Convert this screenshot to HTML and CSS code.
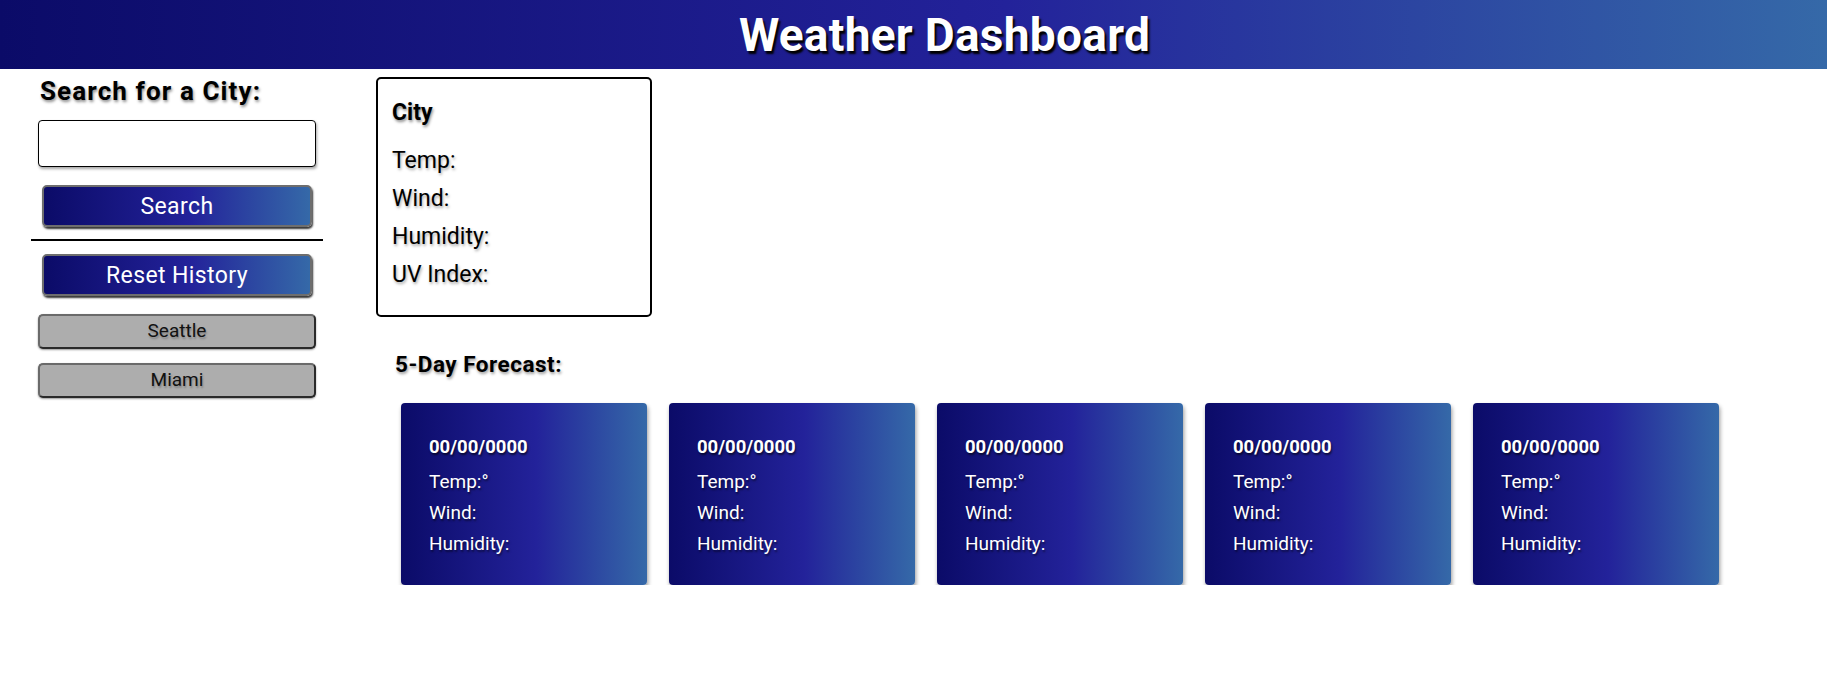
FILE: index.html
```html
<!DOCTYPE html>
<html lang="en">
<head>
<meta charset="utf-8">
<title>Weather Dashboard</title>
<link rel="stylesheet" href="styles.css">
</head>
<body>
<header class="topbar">
  <h1 class="title">Weather Dashboard</h1>
</header>
<main class="layout">
  <aside class="sidebar">
    <h2 class="side-heading">Search for a City:</h2>
    <input class="city-input" type="text">
    <button class="btn-primary">Search</button>
    <hr class="divider">
    <button class="btn-primary btn-reset">Reset History</button>
    <div class="history">
      <button class="btn-history">Seattle</button>
      <button class="btn-history">Miami</button>
    </div>
  </aside>
  <section class="content">
    <div class="current">
      <h3 class="current-city">City</h3>
      <p class="current-line">Temp:</p>
      <p class="current-line">Wind:</p>
      <p class="current-line">Humidity:</p>
      <p class="current-line">UV Index:</p>
    </div>
    <h3 class="forecast-heading">5-Day Forecast:</h3>
    <div class="forecast-row">
      <div class="fcard"><h4 class="fdate">00/00/0000</h4><p class="fline">Temp:&deg;</p><p class="fline">Wind:</p><p class="fline">Humidity:</p></div>
      <div class="fcard"><h4 class="fdate">00/00/0000</h4><p class="fline">Temp:&deg;</p><p class="fline">Wind:</p><p class="fline">Humidity:</p></div>
      <div class="fcard"><h4 class="fdate">00/00/0000</h4><p class="fline">Temp:&deg;</p><p class="fline">Wind:</p><p class="fline">Humidity:</p></div>
      <div class="fcard"><h4 class="fdate">00/00/0000</h4><p class="fline">Temp:&deg;</p><p class="fline">Wind:</p><p class="fline">Humidity:</p></div>
      <div class="fcard"><h4 class="fdate">00/00/0000</h4><p class="fline">Temp:&deg;</p><p class="fline">Wind:</p><p class="fline">Humidity:</p></div>
    </div>
  </section>
</main>
</body>
</html>
```

FILE: styles.css
```css
* { box-sizing: border-box; }

body {
  margin: 0;
  font-family: Roboto, "Noto Sans", sans-serif;
  color: #000;
  background: #fff;
}

.topbar {
  height: 69px;
  padding-left: 62px;
  display: flex;
  align-items: center;
  justify-content: center;
  background: linear-gradient(90deg, #0b0b68 0%, #23229a 55%, #3569a8 100%);
}

.title {
  margin: 0;
  color: #fff;
  font-size: 46px;
  font-weight: 700;
  letter-spacing: 0.3px;
  text-shadow: 2px 3px 2px #000;
}

.layout {
  display: flex;
  align-items: flex-start;
}

.sidebar {
  width: 292px;
  margin-left: 31px;
  display: flex;
  flex-direction: column;
  align-items: center;
}

.side-heading {
  align-self: flex-start;
  margin: 6px 0 0 9px;
  font-size: 26px;
  line-height: 32px;
  font-weight: 700;
  letter-spacing: 1.1px;
  text-shadow: 1px 2px 3px rgba(0,0,0,0.45);
}

.city-input {
  margin-top: 13px;
  width: 278px;
  height: 47px;
  border: 1px solid #000;
  border-radius: 4px;
  box-shadow: 1px 2px 3px rgba(0,0,0,0.35);
}

.btn-primary {
  width: 270px;
  height: 42px;
  margin-top: 18px;
  border: 2px solid #6e6e6e;
  border-radius: 5px;
  background: linear-gradient(90deg, #0b0b68 0%, #23229a 55%, #3569a8 100%);
  color: #fff;
  font-family: Roboto, "Noto Sans", sans-serif;
  font-size: 23px;
  letter-spacing: 0.4px;
  box-shadow: 1px 2px 2px rgba(0,0,0,0.8);
}

.divider {
  width: 292px;
  margin: 12px 0 0;
  border: 0;
  border-top: 2px solid #000;
}

.btn-reset {
  margin-top: 13px;
  height: 42px;
}

.history {
  display: flex;
  flex-direction: column;
  gap: 14px;
  margin-top: 18px;
}

.btn-history {
  width: 278px;
  height: 35px;
  border: 2px solid #6a6a6a;
  border-bottom-color: #2a2a2a;
  border-right-color: #2a2a2a;
  border-radius: 5px;
  background: #adadad;
  color: #111;
  font-family: Roboto, "Noto Sans", sans-serif;
  font-size: 19px;
  padding: 0 0 2px;
  text-shadow: 1px 2px 2px rgba(0,0,0,0.25);
  box-shadow: 0 1px 2px rgba(0,0,0,0.4);
}

.content {
  margin-left: 53px;
  display: flex;
  flex-direction: column;
}

.current {
  margin-top: 8px;
  width: 276px;
  height: 240px;
  border: 2px solid #000;
  border-radius: 5px;
  padding: 18px 14px;
}

.current-city {
  margin: 0 0 13px;
  font-size: 23px;
  line-height: 32px;
  font-weight: 700;
  text-shadow: 1px 2px 3px rgba(0,0,0,0.45);
}

.current-line {
  margin: 0;
  font-size: 23px;
  line-height: 38px;
  text-shadow: 1px 2px 3px rgba(0,0,0,0.35);
}

.forecast-heading {
  margin: 32px 0 0 19px;
  font-size: 22.5px;
  line-height: 30px;
  font-weight: 700;
  letter-spacing: 0.5px;
  text-shadow: 1px 2px 3px rgba(0,0,0,0.4);
}

.forecast-row {
  display: flex;
  gap: 22px;
  margin: 24px 0 0 25px;
}

.fcard {
  width: 246px;
  height: 182px;
  padding: 31px 28px;
  border-radius: 4px;
  background: linear-gradient(90deg, #0b0b68 0%, #23229a 55%, #3569a8 100%);
  color: #fff;
  box-shadow: 1px 3px 4px rgba(0,0,0,0.4);
}

.fdate {
  margin: 0 0 6px;
  font-size: 18.5px;
  line-height: 26px;
  font-weight: 700;
  text-shadow: 1px 2px 2px rgba(0,0,0,0.6);
}

.fline {
  margin: 0;
  font-size: 19px;
  line-height: 31px;
  text-shadow: 1px 2px 2px rgba(0,0,0,0.5);
}
```
